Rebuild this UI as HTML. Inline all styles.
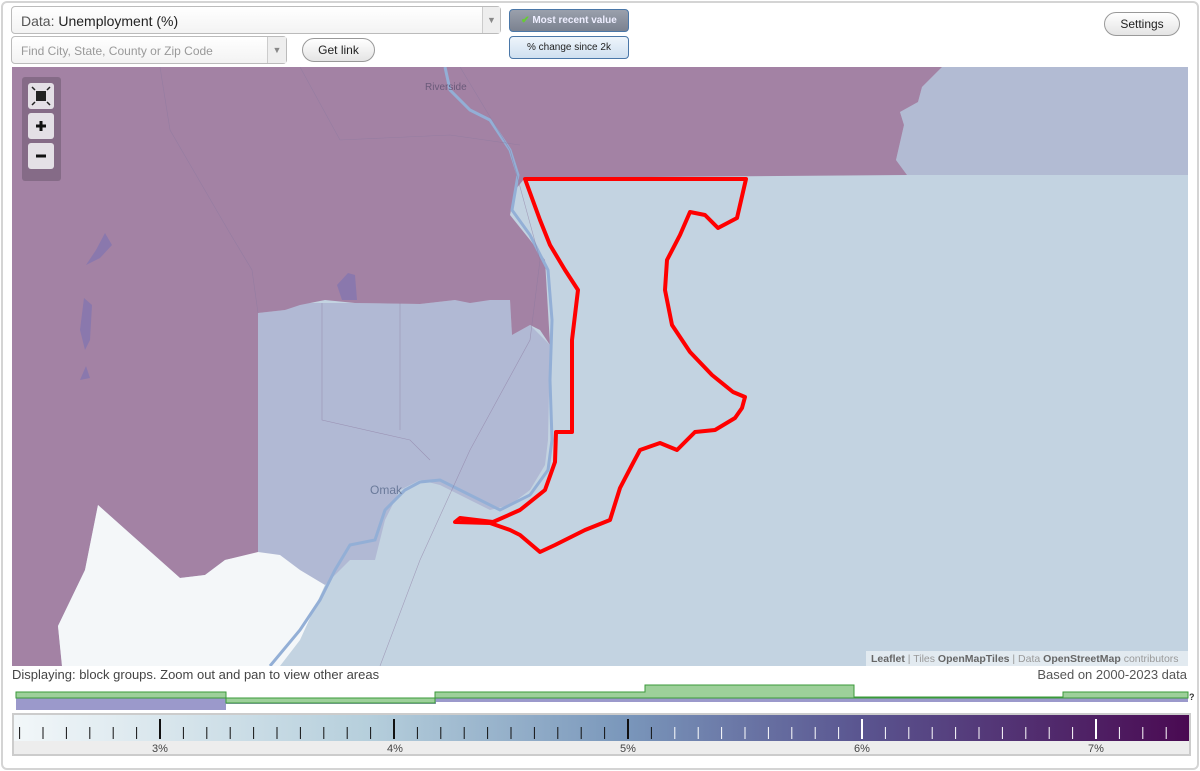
<!DOCTYPE html>
<html><head><meta charset="utf-8"><style>
*{box-sizing:border-box}
body{margin:0;width:1200px;height:771px;background:#fff;font-family:"Liberation Sans",Arial,sans-serif;position:relative;overflow:hidden}
.frame{position:absolute;left:1px;top:1px;width:1198px;height:769px;border:2px solid #d4d4d4;border-radius:6px}
.sel{position:absolute;background:linear-gradient(#fff,#f3f3f3);border:1px solid #bbb;border-radius:4px}
.arr{position:absolute;right:0;top:0;bottom:0;width:18px;border-left:1px solid #ccc;background:#eee;color:#888;font-size:9px;text-align:center}
.btn{position:absolute;border:1px solid #999;border-radius:12px;background:linear-gradient(#fff,#e4e4e4);font-size:12px;text-align:center;color:#222}
.tb{position:absolute;left:509px;width:120px;border:1px solid #4a77a8;border-radius:4px;font-size:10px;text-align:center}
</style></head><body>
<div class="frame"></div>
<div class="sel" style="left:11px;top:6px;width:490px;height:28px;font-size:14px;color:#222;padding:6px 0 0 9px"><span style="color:#555">Data:</span> Unemployment (%)<div class="arr" style="padding-top:8px">▼</div></div>
<div class="sel" style="left:11px;top:36px;width:276px;height:28px;font-size:12px;color:#999;padding:7px 0 0 9px">Find City, State, County or Zip Code<div class="arr" style="padding-top:8px;width:19px">▼</div></div>
<div class="btn" style="left:302px;top:38px;width:73px;height:24px;line-height:22px">Get link</div>
<div class="tb" style="top:9px;height:23px;line-height:21px;background:linear-gradient(#9aa0ac,#7b8290);color:#eef;font-weight:bold"><span style="color:#6c3">✔</span> Most recent value</div>
<div class="tb" style="top:36px;height:23px;line-height:21px;background:linear-gradient(#eef5fb,#cfe0f0);color:#222">% change since 2k</div>
<div class="btn" style="left:1104px;top:12px;width:76px;height:24px;line-height:22px">Settings</div>

<svg style="position:absolute;left:12px;top:67px" width="1176" height="599" viewBox="12 67 1176 599">
<rect x="12" y="67" width="1176" height="599" fill="#c3d3e1"/>
<polygon fill="#b2bbd3" points="942,67 1188,67 1188,175 907,175 896,160 904,125 900,112 918,102 922,87"/>
<polygon fill="#b1b9d4" points="258,313 285,310 300,303 355,303 420,304 455,300 490,300 510,300 512,335 530,325 545,340 550,345 548,440 545,465 530,490 510,505 490,510 470,500 440,485 420,480 400,490 385,520 375,560 350,560 325,585 300,575 285,565 258,553"/>
<polygon fill="#a382a4" points="12,67 942,67 922,87 918,102 900,112 904,125 896,160 907,175 525,178 515,190 510,215 530,240 545,260 550,345 540,330 530,325 512,335 510,300 490,300 470,303 455,300 420,304 355,303 325,300 300,305 285,310 258,313 258,553 225,560 205,575 180,578 98,505 85,570 58,626 62,666 12,666"/>
<polygon fill="#f4f7f9" points="98,505 180,578 205,575 225,560 258,552 280,555 300,570 325,585 300,640 280,666 62,666 58,626 85,570"/>
<g fill="#8a78ad"><polygon points="105,233 112,245 100,258 86,265 96,250"/><polygon points="84,298 92,305 90,340 85,350 80,330"/><polygon points="348,273 355,275 357,300 342,300 337,285"/><polygon points="86,366 90,378 80,380"/></g>
<path d="M445,67 L450,90 470,110 490,120 510,150 518,175 512,210 530,235 548,270 552,320 550,380 552,440 548,470 530,495 500,510 470,495 440,480 420,482 405,490 385,510 375,540 350,545 335,570 320,600 300,630 270,666" fill="none" stroke="#93afd6" stroke-width="3"/>
<g fill="none" stroke="#8c7aa0" stroke-width="0.6" opacity="0.6"><path d="M160,67 L170,130 228,230 252,270 258,313"/><path d="M300,67 L340,140 450,135 520,145"/><path d="M322,303 L322,420 410,440 430,460"/><path d="M400,303 L400,430"/><path d="M460,67 L510,150 540,260 530,340 470,450 420,560 380,666"/></g>
<text x="425" y="90" font-size="10" fill="#6a5a7a" font-family="Liberation Sans">Riverside</text>
<text x="370" y="494" font-size="12" fill="#6a7a9a" font-family="Liberation Sans">Omak</text>
<polygon fill="none" stroke="#f00" stroke-width="4" stroke-linejoin="round" points="525,179 746,179 737,218 718,228 705,215 690,212 680,235 667,260 665,290 672,325 690,352 712,375 733,392 745,397 742,408 735,418 715,430 695,432 677,450 660,443 640,450 632,465 620,488 610,520 585,530 555,545 540,552 520,535 510,530 490,523 455,522 460,518 493,522 520,510 545,490 555,462 556,432 572,432 572,340 578,290 565,270 550,245 540,220"/>
<rect x="22" y="77" width="39" height="104" rx="3" fill="#6e5a70" opacity="0.55"/>
<rect x="28" y="83" width="26" height="26" rx="3" fill="#e4e0e6"/><rect x="36" y="91" width="10" height="10" fill="#222"/>
<path d="M32,87l3,3M50,87l-3,3M32,105l3,-3M50,105l-3,-3" stroke="#222" stroke-width="1.5"/>
<rect x="28" y="113" width="26" height="26" rx="3" fill="#e4e0e6"/><path d="M41,121v10M36,126h10" stroke="#111" stroke-width="3"/>
<rect x="28" y="143" width="26" height="26" rx="3" fill="#e4e0e6"/><path d="M36,156h10" stroke="#111" stroke-width="3"/>
<rect x="866" y="651" width="322" height="15" fill="#e6ecf2" opacity="0.9"/>
<text x="871" y="662" font-size="10.5" fill="#999" font-family="Liberation Sans"><tspan fill="#666" font-weight="bold">Leaflet</tspan> | Tiles <tspan fill="#666" font-weight="bold">OpenMapTiles</tspan> | Data <tspan fill="#666" font-weight="bold">OpenStreetMap</tspan> contributors</text>
</svg>
<div style="position:absolute;left:12px;top:667px;font-size:13px;color:#444">Displaying: block groups. Zoom out and pan to view other areas</div>
<div style="position:absolute;right:13px;top:667px;font-size:13px;color:#555">Based on 2000-2023 data</div>
<svg style="position:absolute;left:0;top:680px" width="1200" height="34">
<polygon fill="#9b99cb" points="16,18 226,18 226,30 16,30"/><rect x="226" y="18" width="210" height="6" fill="#9b99cb"/><rect x="436" y="18" width="752" height="4" fill="#9b99cb"/>
<path d="M16,18 V12 H226 V23 H435 V12 H645 V5 H854 V17 H1063 V12 H1188 V18 Z" fill="#9dd09a" stroke="#3a9a3a" stroke-width="1"/>
<text x="1189" y="20" font-size="9" font-weight="bold" fill="#333">?</text>
</svg>
<div style="position:absolute;left:12px;top:713px;width:1179px;height:43px;border:2px solid #ccc;background:#ededed"></div>
<svg style="position:absolute;left:14px;top:715px" width="1175" height="39">
<defs><linearGradient id="g" x1="0" x2="1"><stop offset="0" stop-color="#f2f7f9"/><stop offset=".3" stop-color="#b6cfdc"/><stop offset=".52" stop-color="#7a97bb"/><stop offset=".72" stop-color="#5a5590"/><stop offset="1" stop-color="#4a0a52"/></linearGradient></defs>
<rect x="0" y="0" width="1175" height="26" fill="url(#g)"/>
<g id="t"></g>
<g font-size="11" fill="#444" text-anchor="middle" font-family="Liberation Sans"><text x="146" y="37">3%</text><text x="381" y="37">4%</text><text x="614" y="37">5%</text><text x="848" y="37">6%</text><text x="1082" y="37">7%</text></g>
</svg>
<script>
var g=document.getElementById('t'),s='';
for(var i=-6;i<=44;i++){var x=146+i*23.4;if(x<2||x>1173)continue;var maj=i%10==0;var c=x>640?'#fff':'#111';s+='<line x1="'+x+'" x2="'+x+'" y1="'+(maj?4:12)+'" y2="24" stroke="'+c+'" stroke-width="'+(maj?2:1)+'"/>';}
g.innerHTML=s;
</script>
</body></html>
